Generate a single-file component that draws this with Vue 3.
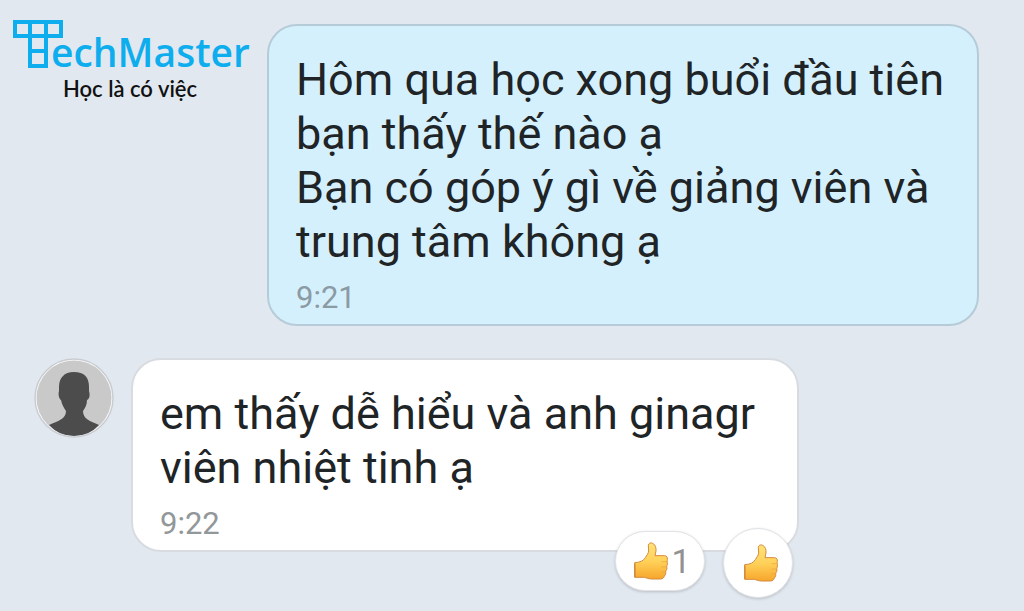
<script setup>
const sent = [
  'Hôm qua học xong buổi đầu tiên',
  'bạn thấy thế nào ạ',
  'Bạn có góp ý gì về giảng viên và',
  'trung tâm không ạ',
]
const received = ['em thấy dễ hiểu và anh ginagr', 'viên nhiệt tinh ạ']
</script>

<template>
  <main class="chat">
    <svg class="defs" aria-hidden="true">
      <defs>
        <linearGradient id="thumb-fill" x1="0" y1="0" x2="0" y2="1">
          <stop offset="0" stop-color="#ffe27a" />
          <stop offset="0.5" stop-color="#ffd25a" />
          <stop offset="1" stop-color="#f7a52c" />
        </linearGradient>
        <symbol id="thumb" viewBox="0 0 102 114">
          <path
            d="M2 62 C18 61 28 57 34 47 C38 40 43 35 44 27 L43 11 C43 3 50 1 56 4 C64 8 67 17 66 27 L63 41 L91 41 C98 41 101 46 100 52 C99 56 100 57 100 62 C101 68 99 70 98 74 C100 80 98 84 95 87 C96 93 95 98 91 102 C89 108 86 111 79 111 L54 111 C44 111 38 108 31 106 L2 106 Z"
            fill="url(#thumb-fill)" stroke="#d58a3c" stroke-width="3" stroke-linejoin="round"
          />
          <path d="M84 59 L98 59 M83 75 L97 75 M82 90 L94 90" fill="none" stroke="#eda53c" stroke-width="2" stroke-linecap="round" />
          <path d="M3 65 L3 105" stroke="#bc7130" stroke-width="2" />
        </symbol>
      </defs>
    </svg>

    <section class="row first">
      <header class="brand">
        <div class="wordmark">
          <svg class="mark" viewBox="0 0 50 48" role="img" aria-label="T">
            <path d="M2 2 H48 V16 H2 Z M17 2 V46 H33 V2 M17 31 H33" fill="none" stroke="#0eaeee" stroke-width="4" />
          </svg>
          <span class="name">echMaster</span>
        </div>
        <p class="slogan">Học là có việc</p>
      </header>
      <article class="bubble sent">
        <p v-for="line in sent" :key="line" class="line">{{ line }}</p>
        <time class="time">9:21</time>
      </article>
    </section>

    <section class="row second">
      <svg class="avatar" viewBox="0 0 80 80" role="img" aria-label="Avatar">
        <circle cx="40" cy="40" r="39" fill="#fafbfc" stroke="#c9cdd2" stroke-width="1.5" />
        <circle cx="40" cy="40" r="37.5" fill="#c9c9c9" />
        <path
          d="M40 14 C30 14 25 20 25 29 L25 33 C24 36 25 41 27 42 C28 47 30 50 32 53 C32 61 24 63 15 67 Q25 78 40 78 Q55 78 65 67 C56 63 49 61 49 53 C51 50 53 47 53 42 C56 41 56 36 55 33 L55 29 C55 19 50 14 40 14 Z"
          fill="#4c4c4c"
        />
      </svg>
      <article class="bubble received">
        <p v-for="line in received" :key="line" class="line">{{ line }}</p>
        <time class="time">9:22</time>
        <div class="reactions">
          <button class="reaction count" type="button" aria-label="1 lượt thích">
            <svg class="thumb"><use href="#thumb" /></svg>
            <span>1</span>
          </button>
          <button class="reaction add" type="button" aria-label="Thích">
            <svg class="thumb"><use href="#thumb" /></svg>
          </button>
        </div>
      </article>
    </section>
  </main>
</template>

<style>
body {
  background: #e2e8f0;
}
</style>

<style scoped>
.chat {
  box-sizing: border-box;
  min-height: 100vh;
  padding: 24px 45px 32px 13px;
  overflow: hidden;
  background: #e2e8f0;
  font-family: Roboto, "Noto Sans", sans-serif;
  color: #1f2427;
}
.defs {
  position: absolute;
  width: 0;
  height: 0;
}
p {
  margin: 0;
}
.row {
  display: flex;
  align-items: flex-start;
}
.first {
  justify-content: space-between;
}
.second {
  gap: 17px;
  margin-top: 32px;
  padding-left: 21px;
}
.brand {
  margin-top: -4px;
}
.wordmark {
  display: flex;
  height: 48px;
}
.mark {
  flex: none;
  width: 50px;
  height: 48px;
}
.name {
  margin: 12px 0 0 -12px;
  color: #0eaeee;
  font: 600 39px/40px "Open Sans", "Noto Sans", sans-serif;
}
.slogan {
  margin-top: 8px;
  padding-left: 50px;
  color: #111;
  font: 600 22px/26px Lato, "Noto Sans", sans-serif;
}
.bubble {
  position: relative;
  flex: none;
  box-sizing: border-box;
  padding: 27px 33px 8px 27px;
  border: 2px solid #b5ccd8;
  border-radius: 30px;
}
.sent {
  background: #d5f0fd;
}
.received {
  padding-right: 42px;
  border-color: #d8dce0;
  background: #fff;
}
.line {
  font-size: 45px;
  line-height: 54px;
  white-space: nowrap;
}
.time {
  display: block;
  margin-top: 11px;
  color: #8b9ba4;
  font-size: 31px;
  line-height: 36px;
}
.received .time {
  color: #92979a;
}
.reactions {
  position: absolute;
  right: 4px;
  bottom: -48px;
  display: flex;
  align-items: flex-start;
  gap: 18px;
}
.reaction {
  display: flex;
  align-items: center;
  justify-content: center;
  box-sizing: border-box;
  padding: 0;
  border: 1px solid #e1e3e6;
  border-radius: 35px;
  background: #fff;
  box-shadow: 0 1px 3px #0000002e;
  color: #929292;
  font: 34px/40px Roboto, sans-serif;
}
.count {
  gap: 3px;
  width: 90px;
  height: 60px;
  margin-top: 3px;
  padding-left: 5px;
}
.add {
  width: 70px;
  height: 70px;
}
.avatar {
  flex: none;
  width: 80px;
  height: 80px;
}
.thumb {
  width: 34px;
  height: 38px;
}
.add .thumb {
  margin-left: 6px;
}
</style>
